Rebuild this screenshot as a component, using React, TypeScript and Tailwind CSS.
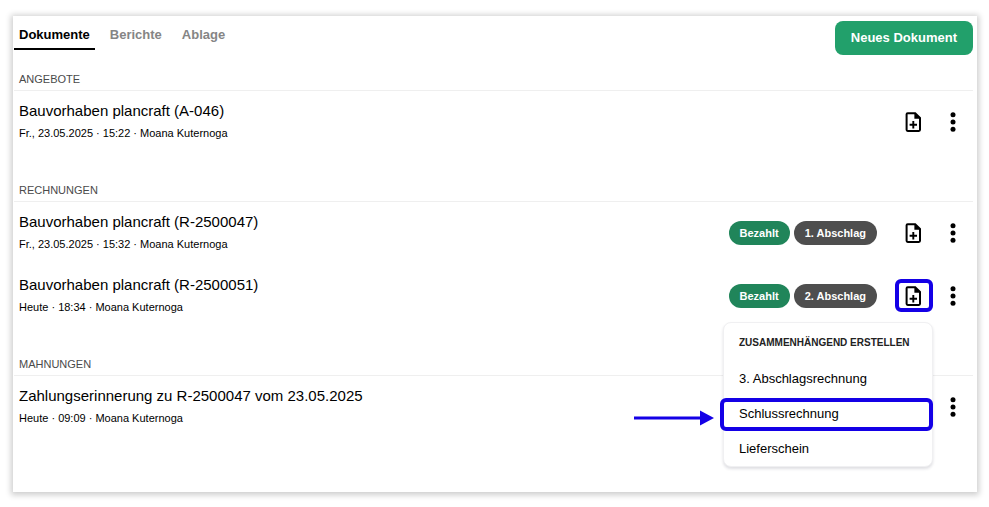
import type { ReactNode } from "react";

type Doc = {
  title: string;
  meta: string;
  badges?: string[];
  canExtend?: boolean;
  menuOpen?: boolean;
};

const tabs = ["Dokumente", "Berichte", "Ablage"];

const sections: { name: string; docs: Doc[] }[] = [
  {
    name: "Angebote",
    docs: [
      { title: "Bauvorhaben plancraft (A-046)", meta: "Fr., 23.05.2025 · 15:22 · Moana Kuternoga", canExtend: true },
    ],
  },
  {
    name: "Rechnungen",
    docs: [
      {
        title: "Bauvorhaben plancraft (R-2500047)",
        meta: "Fr., 23.05.2025 · 15:32 · Moana Kuternoga",
        badges: ["Bezahlt", "1. Abschlag"],
        canExtend: true,
      },
      {
        title: "Bauvorhaben plancraft (R-2500051)",
        meta: "Heute · 18:34 · Moana Kuternoga",
        badges: ["Bezahlt", "2. Abschlag"],
        canExtend: true,
        menuOpen: true,
      },
    ],
  },
  {
    name: "Mahnungen",
    docs: [{ title: "Zahlungserinnerung zu R-2500047 vom 23.05.2025", meta: "Heute · 09:09 · Moana Kuternoga" }],
  },
];

const menuItems = ["3. Abschlagsrechnung", "Schlussrechnung", "Lieferschein"];

function FilePlusIcon() {
  return (
    <svg viewBox="0 0 24 24" className="h-6 w-6" fill="none" stroke="currentColor" strokeWidth="2">
      <path d="M5.7 3.2H13.2L18 8V19.8A1.1 1.1 0 0 1 16.9 20.9H5.7A1.1 1.1 0 0 1 4.6 19.8V4.3A1.1 1.1 0 0 1 5.7 3.2Z" />
      <path d="M12.4 3V8.8H18.4Z" fill="currentColor" stroke="none" />
      <path d="M11.3 11V18.4M7.6 14.7H15" strokeWidth="1.9" />
    </svg>
  );
}

function DotsIcon() {
  return (
    <svg viewBox="0 0 24 24" className="h-6 w-6" fill="currentColor">
      <circle cx="12" cy="4.8" r="2.5" />
      <circle cx="12" cy="12" r="2.5" />
      <circle cx="12" cy="19.2" r="2.5" />
    </svg>
  );
}

function Badge({ children }: { children: ReactNode }) {
  const isPaid = children === "Bezahlt";
  return (
    <span
      className={`rounded-full px-[11px] text-[11px] leading-6 font-bold text-white ${
        isPaid ? "bg-[#20855a]" : "bg-[#4e4e4e]"
      }`}
    >
      {children}
    </span>
  );
}

function CreateMenu() {
  return (
    <div className="absolute top-full right-0 z-10 mt-[10px] w-[210px] rounded-lg border border-[#f0f0f2] bg-white pt-2 shadow-[0_2px_3px_rgba(30,30,60,0.14)]">
      <h3 className="px-[15px] text-[10px] leading-6 font-bold whitespace-nowrap text-[#222222] uppercase">
        Zusammenhängend erstellen
      </h3>
      <ul className="pt-1.5">
        {menuItems.map((item) => (
          <li key={item} className="relative">
            <button className="h-[35px] w-full px-[15px] text-left text-[13px]">{item}</button>
            {item === "Schlussrechnung" && (
              <>
                <span className="pointer-events-none absolute top-0.5 -right-px bottom-0 -left-1 rounded-md border-4 border-[#1400e6]" />
                {/* Pointer to the highlighted entry */}
                <svg
                  viewBox="0 0 80 16"
                  className="pointer-events-none absolute top-3.5 right-full mr-[10px] h-4 w-20"
                  fill="#1400e6"
                >
                  <path d="M0 6.5H66V0.5L80 8L66 15.5V9.5H0Z" />
                </svg>
              </>
            )}
          </li>
        ))}
      </ul>
    </div>
  );
}

function DocumentRow({ doc }: { doc: Doc }) {
  return (
    <li className="flex h-[63px] items-center pb-0.5">
      <div className="min-w-0 flex-1 pb-0.5 pl-[5px]">
        <p className="truncate text-[15px] leading-6">{doc.title}</p>
        <p className="truncate text-[11px] leading-5">{doc.meta}</p>
      </div>
      {doc.badges && (
        <div className="mr-[18px] flex gap-1">
          {doc.badges.map((badge) => (
            <Badge key={badge}>{badge}</Badge>
          ))}
        </div>
      )}
      {doc.canExtend && (
        <div className="relative">
          <button
            aria-label="Zusammenhängend erstellen"
            className={`flex h-[33px] w-[38px] items-center justify-center rounded-md border-4 ${
              doc.menuOpen ? "border-[#1400e6]" : "border-transparent"
            }`}
          >
            <FilePlusIcon />
          </button>
          {doc.menuOpen && <CreateMenu />}
        </div>
      )}
      <button aria-label="Mehr" className="flex h-8 w-10 items-center justify-center">
        <DotsIcon />
      </button>
    </li>
  );
}

export default function App() {
  return (
    <div className="min-h-screen bg-white pt-4 pr-3 pb-[15px] pl-[13px] font-['Liberation_Sans',Arial,sans-serif] text-black">
      <main className="bg-white pt-[5px] pr-1 pb-[53px] pl-px shadow-[0_1px_6px_2px_rgba(0,0,0,0.2)]">
        <header className="flex items-start justify-between">
          <nav className="flex gap-[10px]">
            {tabs.map((tab) => (
              <a
                key={tab}
                href="#"
                className={`border-b-2 px-[5px] pt-[3px] pb-0.5 text-[13px] leading-[22px] font-bold ${
                  tab === "Dokumente" ? "border-black" : "border-transparent text-[#858585]"
                }`}
              >
                {tab}
              </a>
            ))}
          </nav>
          <button className="h-[34px] rounded-lg bg-[#22a06b] px-4 text-[13px] font-bold text-white">
            Neues Dokument
          </button>
        </header>

        <div className="mt-[13px] flex flex-col gap-[25px]">
          {sections.map((section) => (
            <section key={section.name}>
              <h2 className="border-b border-[#efefef] pl-[5px] text-[11px] leading-[22px] text-[#4a4a4a] uppercase">
                {section.name}
              </h2>
              <ul>
                {section.docs.map((doc) => (
                  <DocumentRow key={doc.title} doc={doc} />
                ))}
              </ul>
            </section>
          ))}
        </div>
      </main>
    </div>
  );
}
